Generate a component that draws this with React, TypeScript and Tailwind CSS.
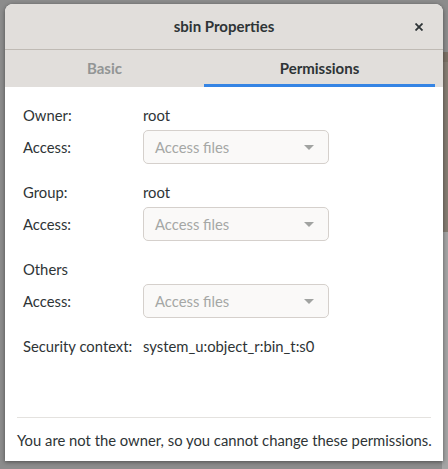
import React from 'react';

const font = { fontFamily: 'Lato, "Noto Sans", sans-serif' };

function AccessCombo() {
	return (
		<div className="flex h-[34px] w-[186px] items-center justify-between rounded-[5px] border border-[#d5d0cc] bg-[#faf9f8] pl-[11px] pr-[14px] text-[#a5a7a5]">
			<span>Access files</span>
			<svg width="10" height="5" viewBox="0 0 10 5">
				<path d="M0 0 L10 0 L5 5 Z" fill="#a1a3a1" />
			</svg>
		</div>
	);
}

function Row({ label, children }: { label: string; children: React.ReactNode }) {
	return (
		<div className="flex h-[20px] items-center">
			<div className="w-[120px] shrink-0">{label}</div>
			{children}
		</div>
	);
}

function AccessRow() {
	return (
		<div className="mt-[5px] flex h-[34px] items-center">
			<div className="w-[120px] shrink-0">Access:</div>
			<AccessCombo />
		</div>
	);
}

export default function App() {
	return (
		<div
			className="relative h-[469px] w-[448px] overflow-hidden bg-[#8c8c8c] text-[14.8px] text-[#2e3436]"
			style={font}
		>
			{/* bits of the window behind */}
			<div className="absolute right-0 top-[52px] h-[10px] w-[6px] bg-[#7a7065]" />
			<div className="absolute right-0 top-[62px] h-[170px] w-[6px] bg-[#857c72]" />
			<div className="absolute right-0 top-[232px] h-[237px] w-[6px] bg-[#a4a4a4]" />

			<div className="absolute left-[5px] top-[4px] flex h-[457px] w-[438px] flex-col overflow-hidden rounded-t-[8px] bg-white shadow-[0_1px_4px_rgba(0,0,0,0.45)]">
				{/* title bar */}
				<div className="relative flex h-[46px] shrink-0 items-center justify-center border-b border-[#bfbab4] bg-[#e1dedb] text-[15px] font-bold">
					sbin Properties
					<svg
						className="absolute right-[20px] top-[19px]"
						width="8"
						height="8"
						viewBox="0 0 8 8"
					>
						<path d="M0.5 0.5 L7.5 7.5 M7.5 0.5 L0.5 7.5" stroke="#2e3436" strokeWidth="1.8" />
					</svg>
				</div>

				{/* tabs */}
				<div className="flex h-[37px] shrink-0 bg-[#e1dedb] pr-[8px] text-[15px] font-bold">
					<div className="flex w-[199px] items-center justify-center text-[#929595]">
						Basic
					</div>
					<div className="flex flex-1 items-center justify-center border-b-[3px] border-[#3584e4] pt-[2px]">
						Permissions
					</div>
				</div>

				{/* content */}
				<div className="flex flex-1 flex-col px-[18px]">
					<div className="flex flex-col pt-[18px]">
						<Row label="Owner:">root</Row>
						<AccessRow />
						<div className="mt-[18px]">
							<Row label="Group:">root</Row>
						</div>
						<AccessRow />
						<div className="mt-[18px]">
							<Row label="Others">{null}</Row>
						</div>
						<AccessRow />
						<div className="mt-[18px]">
							<Row label="Security context:">system_u:object_r:bin_t:s0</Row>
						</div>
					</div>
					<div className="flex-1" />
					<div className="mx-[-6px] whitespace-nowrap border-t border-[#e4e2df] pb-[11px] pt-[12px] leading-[20px]">
						You are not the owner, so you cannot change these permissions.
					</div>
				</div>
			</div>
		</div>
	);
}
